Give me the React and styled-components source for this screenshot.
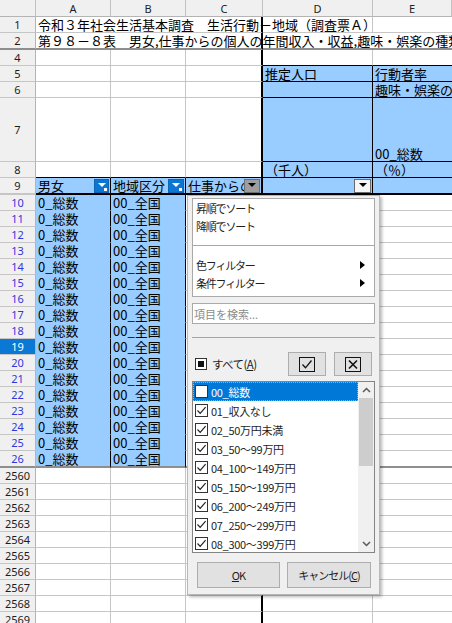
import React from "react"
import styled, { createGlobalStyle } from "styled-components"

const CJK = `"Noto Sans CJK JP", "Noto Sans", sans-serif`
const LATIN = `"Noto Sans", "Liberation Sans", sans-serif`
const GRID = "#c6c6c6"
const HIDDEN = "#8e8e8e"
const BLUE = "#99ccff"
const SEL = "#0a78d4"

// column widths (row header is 36, E takes the rest)
const W = { A: 75, B: 75, C: 77, D: 110 }

const GlobalStyle = createGlobalStyle`
  html, body { margin: 0; padding: 0; background: #fff; }
  body { overflow: hidden; }
`

const Sheet = styled.div`
  position: relative;
  width: 452px;
  height: 623px;
  overflow: hidden;
  background: #fff;
  font-family: ${CJK};
`

const Row = styled.div`
  display: flex;
  height: ${p => p.$h || 16}px;
`

const ColHead = styled.div`
  box-sizing: border-box;
  flex: ${p => (p.$w ? `0 0 ${p.$w}px` : "1 1 0")};
  display: flex;
  align-items: center;
  justify-content: center;
  background: #f0f0f0;
  border-right: 1px solid #c2c2c2;
  border-bottom: 1px solid #b4b4b4;
  font: 11px ${LATIN};
  color: #222;
`

const RowHead = styled.div`
  box-sizing: border-box;
  flex: 0 0 36px;
  display: flex;
  align-items: center;
  justify-content: center;
  background: ${p => (p.$active ? SEL : "#f0f0f0")};
  color: ${p => (p.$active ? "#fff" : p.$filtered ? "#3535dc" : "#1c1c1c")};
  border-right: 1px solid #b4b4b4;
  border-bottom: ${p => p.$bw || 1}px solid ${p => p.$b || GRID};
  font: 11px ${LATIN};
`

const Cell = styled.div`
  box-sizing: border-box;
  flex: ${p => (p.$w ? `0 0 ${p.$w}px` : "1 1 0")};
  min-width: 0;
  display: flex;
  align-items: flex-end;
  padding-left: 2px;
  background: ${p => p.$bg || "transparent"};
  border-right: ${p => (p.$rw === undefined ? 1 : p.$rw)}px solid ${p => p.$r || GRID};
  border-bottom: ${p => (p.$bw === undefined ? 1 : p.$bw)}px solid ${p => p.$b || GRID};
  font-size: 13px;
  line-height: 15px;
  color: #000;
  white-space: nowrap;
  overflow: ${p => (p.$spill ? "visible" : "hidden")};
`

const HeaderCell = styled(Cell)`
  align-items: center;
`

const CellText = styled.span`
  flex: 1 1 auto;
  min-width: 0;
  overflow: hidden;
`

const FilterBtn = styled.span`
  position: relative;
  flex: 0 0 ${p => p.$w || 15}px;
  height: 14px;
  margin-right: 1px;
  box-sizing: border-box;
  display: flex;
  align-items: center;
  justify-content: center;
  background: ${p => (p.$kind === "active" ? "#0c76d2" : p.$kind === "pressed" ? "#9e9e9e" : "#f6f6f6")};
  border: 1px solid ${p => (p.$kind === "active" ? "#0a66b8" : p.$kind === "pressed" ? "#6e6e6e" : "#6a6a6a")};
`

const Tri = styled.span`
  width: 0;
  height: 0;
  margin-top: -2px;
  border-left: 4px solid transparent;
  border-right: 4px solid transparent;
  border-top: 4px solid ${p => p.$c || "#000"};
`

const FilterDot = styled.span`
  position: absolute;
  right: 1px;
  bottom: 1px;
  width: 3px;
  height: 3px;
  background: #fff;
`

/* ---------- autofilter popup ---------- */

const Popup = styled.div`
  position: absolute;
  left: 187px;
  top: 195px;
  z-index: 10;
  width: 193px;
  height: 400px;
  box-sizing: border-box;
  padding: 2px 4px 0;
  display: flex;
  flex-direction: column;
  background: #f0f0f0;
  border: 1px solid #b8b8b8;
  box-shadow: 2px 2px 3px rgba(0, 0, 0, 0.28);
  font-family: ${CJK};
  font-size: 11px;
  color: #1e1e1e;
`

const MenuBox = styled.div`
  flex: 0 0 99px;
  box-sizing: border-box;
  background: #fff;
  border: 1px solid #a9a9a9;
`

const MenuItem = styled.div`
  height: 18px;
  display: flex;
  align-items: center;
  justify-content: space-between;
  padding: 0 9px 0 3px;
  letter-spacing: -1.2px;
`

const SubArrow = styled.span`
  width: 0;
  height: 0;
  border-top: 4px solid transparent;
  border-bottom: 4px solid transparent;
  border-left: 5px solid #000;
`

const MenuRule = styled.div`
  height: 1px;
  margin: 10px 0;
  background: #a8a8a8;
`

const Search = styled.div`
  flex: 0 0 21px;
  margin-top: 6px;
  box-sizing: border-box;
  display: flex;
  align-items: center;
  padding-left: 1px;
  background: #fff;
  border: 1px solid #a9a9a9;
  color: #8c8c8c;
`

const Divider = styled.div`
  flex: 0 0 1px;
  margin-top: 13px;
  background: #a4a4a4;
`

const AllRow = styled.div`
  flex: 0 0 24px;
  margin-top: 14px;
  display: flex;
  align-items: center;
  padding: 0 3px;
  gap: 8px;
`

const TriState = styled.span`
  width: 12px;
  height: 12px;
  box-sizing: border-box;
  display: flex;
  align-items: center;
  justify-content: center;
  background: #fff;
  border: 1px solid #333;
  &::after {
    content: "";
    width: 6px;
    height: 6px;
    background: #111;
  }
`

const AllLabel = styled.span`
  margin-left: -3px;
  margin-right: auto;
  font-size: 11.5px;
  letter-spacing: -0.6px;
`

const IconBtn = styled.button`
  width: 38px;
  height: 24px;
  padding: 0;
  display: flex;
  align-items: center;
  justify-content: center;
  background: #e1e1e1;
  border: 1px solid #adadad;
`

const List = styled.div`
  flex: 0 0 172px;
  margin-top: 5px;
  box-sizing: border-box;
  display: flex;
  background: #fff;
  border: 1px solid #848484;
  overflow: hidden;
`

const Items = styled.div`
  flex: 1 1 auto;
  min-width: 0;
`

const Item = styled.div`
  height: 19px;
  box-sizing: border-box;
  display: flex;
  align-items: center;
  gap: 3px;
  padding-left: 2px;
  white-space: nowrap;
  letter-spacing: -0.3px;
  background: ${p => (p.$sel ? "#0078d7" : "transparent")};
  color: ${p => (p.$sel ? "#fff" : "#1e1e1e")};
  outline: ${p => (p.$sel ? "1px dotted #f39a3c" : "none")};
  outline-offset: -1px;
`

const Box = styled.span`
  flex: 0 0 13px;
  height: 13px;
  box-sizing: border-box;
  display: flex;
  align-items: center;
  justify-content: center;
  background: #fff;
  border: 1px solid #333;
`

const Scroll = styled.div`
  flex: 0 0 16px;
  display: flex;
  flex-direction: column;
  background: #f0f0f0;
`

const ScrollArrow = styled.div`
  flex: 0 0 16px;
  display: flex;
  align-items: center;
  justify-content: center;
`

const Track = styled.div`
  flex: 1 1 auto;
  display: flex;
  flex-direction: column;
`

const Thumb = styled.div`
  flex: 0 0 68px;
  margin: 0 1px;
  background: #cdcdcd;
`

const ButtonRow = styled.div`
  flex: 0 0 26px;
  margin-top: 9px;
  display: flex;
  gap: 7px;
  padding-left: 5px;
`

const DlgButton = styled.button`
  width: ${p => p.$w}px;
  height: 26px;
  padding: 0;
  background: #e1e1e1;
  border: 1px solid #adadad;
  font-family: ${CJK};
  font-size: 11px;
  letter-spacing: -1px;
  color: #1e1e1e;
`

const Tick = () => (
  <svg width="11" height="11" viewBox="0 0 11 11">
    <polyline points="1.5,5.5 4.2,8.3 9.6,2.2" fill="none" stroke="#222" strokeWidth="1.2" />
  </svg>
)

const BoxTick = () => (
  <svg width="16" height="15" viewBox="0 0 16 15">
    <rect x="0.5" y="0.5" width="15" height="14" fill="none" stroke="#111" />
    <polyline points="3.5,7.5 6.5,10.8 12.5,3.5" fill="none" stroke="#111" strokeWidth="1.3" />
  </svg>
)

const BoxCross = () => (
  <svg width="16" height="15" viewBox="0 0 16 15">
    <rect x="0.5" y="0.5" width="15" height="14" fill="none" stroke="#111" />
    <path d="M4 3.5 L12 11.5 M12 3.5 L4 11.5" stroke="#111" strokeWidth="1.6" />
  </svg>
)

const Chevron = ({ down }) => (
  <svg width="9" height="6" viewBox="0 0 9 6">
    <polyline
      points={down ? "1,1 4.5,4.5 8,1" : "1,5 4.5,1.5 8,5"}
      fill="none"
      stroke="#5a5a5a"
      strokeWidth="1.5"
    />
  </svg>
)

const ITEMS = [
  "00_総数",
  "01_収入なし",
  "02_50万円未満",
  "03_50～99万円",
  "04_100～149万円",
  "05_150～199万円",
  "06_200～249万円",
  "07_250～299万円",
  "08_300～399万円",
  "09_400～499万円",
]

const FilterPopup = () => (
  <Popup>
    <MenuBox>
      <MenuItem>昇順でソート</MenuItem>
      <MenuItem>降順でソート</MenuItem>
      <MenuRule />
      <MenuItem>色フィルター<SubArrow /></MenuItem>
      <MenuItem>条件フィルター<SubArrow /></MenuItem>
    </MenuBox>
    <Search>項目を検索...</Search>
    <Divider />
    <AllRow>
      <TriState />
      <AllLabel>すべて(<u>A</u>)</AllLabel>
      <IconBtn><BoxTick /></IconBtn>
      <IconBtn><BoxCross /></IconBtn>
    </AllRow>
    <List>
      <Items>
        {ITEMS.map((t, i) => (
          <Item key={t} $sel={i === 0}>
            <Box>{i > 0 && <Tick />}</Box>
            {t}
          </Item>
        ))}
      </Items>
      <Scroll>
        <ScrollArrow><Chevron /></ScrollArrow>
        <Track><Thumb /></Track>
        <ScrollArrow><Chevron down /></ScrollArrow>
      </Scroll>
    </List>
    <ButtonRow>
      <DlgButton $w={83}><u>O</u>K</DlgButton>
      <DlgButton $w={84}>キャンセル(<u>C</u>)</DlgButton>
    </ButtonRow>
  </Popup>
)

const DATA_ROWS = Array.from({ length: 17 }, (_, i) => 10 + i)
const TAIL_ROWS = Array.from({ length: 10 }, (_, i) => 2560 + i)

export default function App() {
  return (
    <>
      <GlobalStyle />
      <Sheet>
        <Row $h={17}>
          <ColHead $w={36} />
          <ColHead $w={W.A}>A</ColHead>
          <ColHead $w={W.B}>B</ColHead>
          <ColHead $w={W.C}>C</ColHead>
          <ColHead $w={W.D}>D</ColHead>
          <ColHead>E</ColHead>
        </Row>

        <Row>
          <RowHead>1</RowHead>
          <Cell $w={W.A + W.B + W.C} $r="#000" $rw={2} $spill>
            令和３年社会生活基本調査　生活行動－地域（調査票Ａ）
          </Cell>
          <Cell $w={W.D} />
          <Cell $rw={0} />
        </Row>

        <Row $h={17}>
          <RowHead $b={HIDDEN} $bw={2}>2</RowHead>
          <Cell $w={W.A + W.B + W.C} $r="#000" $rw={2} $b={HIDDEN} $bw={2} $spill>
            第９８－８表　男女,仕事からの個人の年間収入・収益,趣味・娯楽の種類
          </Cell>
          <Cell $rw={0} $b={HIDDEN} $bw={2} />
        </Row>

        <Row>
          <RowHead>4</RowHead>
          <Cell $w={W.A} />
          <Cell $w={W.B} />
          <Cell $w={W.C} $r="#000" $rw={2} />
          <Cell $w={W.D} $b="#000" />
          <Cell $b="#000" $rw={0} />
        </Row>

        <Row>
          <RowHead>5</RowHead>
          <Cell $w={W.A} />
          <Cell $w={W.B} />
          <Cell $w={W.C} $r="#000" $rw={2} />
          <Cell $w={W.D} $bg={BLUE} $r="#000" $b="#000">推定人口</Cell>
          <Cell $bg={BLUE} $b="#000" $rw={0}>行動者率</Cell>
        </Row>

        <Row>
          <RowHead>6</RowHead>
          <Cell $w={W.A} />
          <Cell $w={W.B} />
          <Cell $w={W.C} $r="#000" $rw={2} />
          <Cell $w={W.D} $bg={BLUE} $r="#000" $b="#000" />
          <Cell $bg={BLUE} $b="#000" $rw={0}>趣味・娯楽の種類</Cell>
        </Row>

        <Row $h={64}>
          <RowHead>7</RowHead>
          <Cell $w={W.A} />
          <Cell $w={W.B} />
          <Cell $w={W.C} $r="#000" $rw={2} />
          <Cell $w={W.D} $bg={BLUE} $r="#000" $b="#000" />
          <Cell $bg={BLUE} $b="#000" $rw={0}>00_総数</Cell>
        </Row>

        <Row>
          <RowHead>8</RowHead>
          <Cell $w={W.A} $b="#000" />
          <Cell $w={W.B} $b="#000" />
          <Cell $w={W.C} $r="#000" $rw={2} $b="#000" />
          <Cell $w={W.D} $bg={BLUE} $r="#000" $b="#000">（千人）</Cell>
          <Cell $bg={BLUE} $b="#000" $rw={0}>（％）</Cell>
        </Row>

        <Row $h={17}>
          <RowHead $bw={2}>9</RowHead>
          <HeaderCell $w={W.A} $bg={BLUE} $r="#000" $b="#000" $bw={2}>
            <CellText>男女</CellText>
            <FilterBtn $kind="active"><Tri $c="#fff" /><FilterDot /></FilterBtn>
          </HeaderCell>
          <HeaderCell $w={W.B} $bg={BLUE} $r="#000" $b="#000" $bw={2}>
            <CellText>地域区分</CellText>
            <FilterBtn $kind="active" $w={16}><Tri $c="#fff" /><FilterDot /></FilterBtn>
          </HeaderCell>
          <HeaderCell $w={W.C} $bg={BLUE} $r="#000" $rw={2} $b="#000" $bw={2}>
            <CellText>仕事からの個人の年間収入・収益</CellText>
            <FilterBtn $kind="pressed" $w={16}><Tri /></FilterBtn>
          </HeaderCell>
          <HeaderCell $w={W.D} $bg={BLUE} $r="#000" $b="#000" $bw={2}>
            <CellText />
            <FilterBtn $w={17}><Tri /></FilterBtn>
          </HeaderCell>
          <HeaderCell $bg={BLUE} $b="#000" $bw={2} $rw={0} />
        </Row>

        {DATA_ROWS.map(n => {
          const last = n === 26
          const bw = last ? 2 : 1
          return (
            <Row key={n} $h={last ? 17 : 16}>
              <RowHead $filtered $active={n === 19} $b={last ? HIDDEN : undefined} $bw={bw}>
                {n}
              </RowHead>
              <Cell $w={W.A} $bg={BLUE} $r="#000" $b={last ? HIDDEN : BLUE} $bw={bw}>0_総数</Cell>
              <Cell $w={W.B} $bg={BLUE} $r="#000" $b={last ? HIDDEN : BLUE} $bw={bw}>00_全国</Cell>
              <Cell $w={W.C} $r="#000" $rw={2} $b={last ? HIDDEN : undefined} $bw={bw} />
              <Cell $w={W.D} $b={last ? HIDDEN : undefined} $bw={bw} />
              <Cell $rw={0} $b={last ? HIDDEN : undefined} $bw={bw} />
            </Row>
          )
        })}

        {TAIL_ROWS.map(n => (
          <Row key={n}>
            <RowHead>{n}</RowHead>
            <Cell $w={W.A} />
            <Cell $w={W.B} />
            <Cell $w={W.C} $r="#000" $rw={2} />
            <Cell $w={W.D} />
            <Cell $rw={0} />
          </Row>
        ))}

        <FilterPopup />
      </Sheet>
    </>
  )
}
